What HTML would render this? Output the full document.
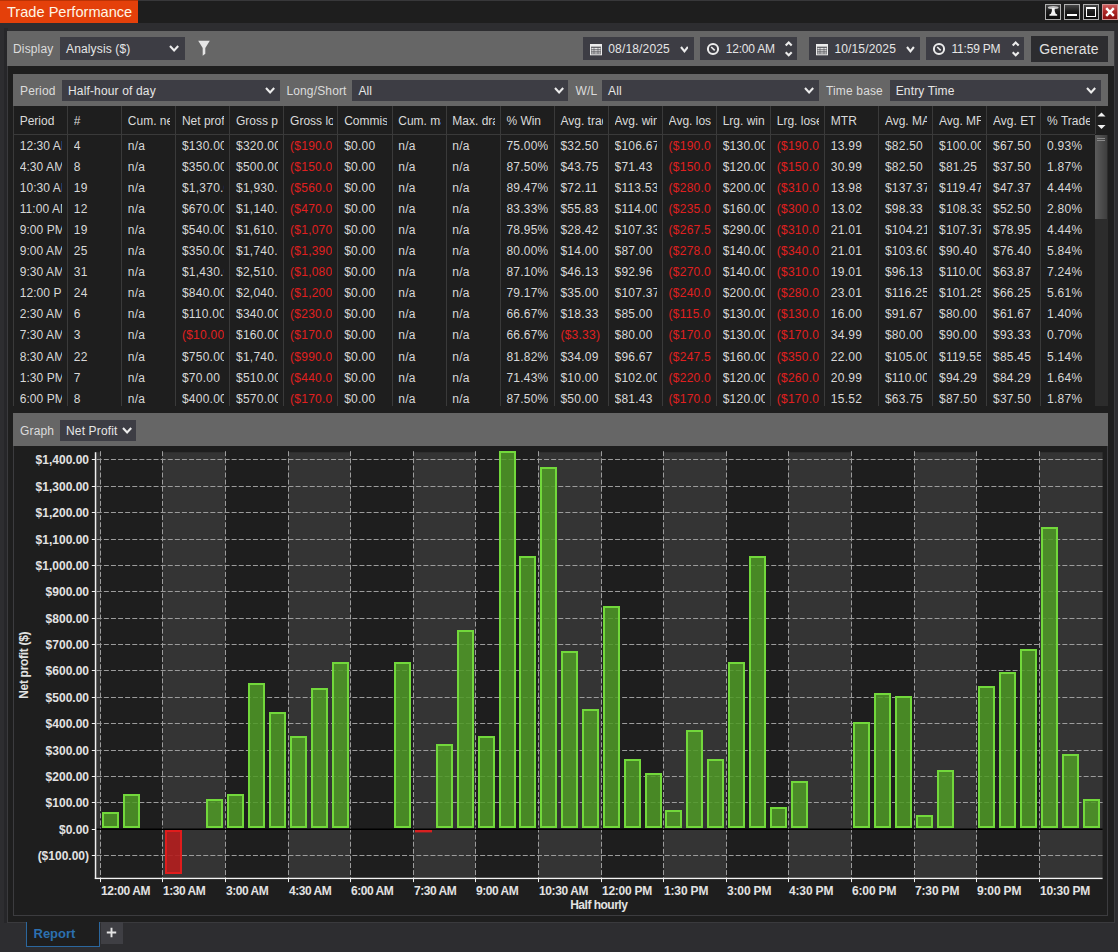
<!DOCTYPE html><html><head><meta charset="utf-8"><title>Trade Performance</title><style>
*{box-sizing:border-box;margin:0;padding:0}
html,body{width:1118px;height:952px;overflow:hidden;background:#2d2d30}
body{position:relative;font-family:"Liberation Sans",sans-serif;font-size:12px;color:#e4e4e4;letter-spacing:0.15px}
.abs{position:absolute}
#titlebar{left:0;top:0;width:1118px;height:23px;background:#1e1e1e;border-top:1px solid #38383a}
#tab{left:0;top:0;width:138px;height:23px;background:#e4400a;border-top:1px solid #b83205;color:#fff6e6;font-size:14.6px;line-height:22px;padding-left:7px;white-space:nowrap;letter-spacing:0}
.wb{top:4px;width:16px;height:16px;border:1px solid #b0b0b0;background:linear-gradient(#484848,#1c1c1c 45%,#0c0c0c)}
#content{left:7px;top:31px;width:1108px;height:892px;background:#1e1e1e;border-left:1px solid #3a3a3d;border-right:1px solid #3a3a3d;border-bottom:1px solid #3a3a3d}
.panel{background:#666666}
.lbl{color:#dcdcdc;white-space:nowrap;font-size:12px;line-height:14px}
.dd{background:#3d3d44;color:#e6e6e6;white-space:nowrap;font-size:12px;padding-left:6px}
.dd svg{position:absolute}
.cell{position:absolute;overflow:hidden;white-space:nowrap;font-size:12px;color:#d8d8d8;height:21px;line-height:21px;letter-spacing:0.24px}
.neg{color:#e02020}
.vline{position:absolute;width:1px;background:#3a3a3a}
#chartbox{left:13px;top:446px;width:1095px;height:470px;background:#1e1e1e;border:1px solid #3c3c3f;border-top:none}
.ax{font-weight:bold;font-size:11.8px;fill:#e2e2e2;font-family:"Liberation Sans",sans-serif;letter-spacing:0}
.axx{letter-spacing:-0.35px}
</style></head><body>
<div id="titlebar" class="abs"></div>
<div id="tab" class="abs">Trade Performance</div>
<div class="abs wb" style="left:1045px"><svg class="abs" style="left:0;top:0" width="14" height="14" viewBox="0 0 14 14"><ellipse cx="7.2" cy="2.6" rx="5.4" ry="1.7" fill="#c4c4c4"/><path d="M5.9 3 L8.7 3 L8.7 6 L9.7 8.7 L11.2 9.6 L11.2 10.8 L3.4 10.8 L3.4 9.6 L4.9 8.7 L5.9 6 Z" fill="#f4f4f4"/></svg></div>
<div class="abs wb" style="left:1064px"><div class="abs" style="left:2px;top:9px;width:10px;height:2px;background:#fff"></div></div>
<div class="abs wb" style="left:1083px"><div class="abs" style="left:2px;top:2px;width:10px;height:10px;border:1px solid #fff;border-top:2px solid #fff"></div></div>
<div class="abs wb" style="left:1102px;background:linear-gradient(#cc6060,#b02828 45%,#8a1010);border-color:#cf9090"><svg class="abs" style="left:0;top:0" width="14" height="14" viewBox="0 0 14 14"><path d="M3.2 3.2 L10.8 10.8 M10.8 3.2 L3.2 10.8" stroke="#fff" stroke-width="2.5" fill="none"/></svg></div>
<div class="abs" style="left:3.5px;top:28px;width:4px;height:895px;background:#262629"></div>
<div id="content" class="abs"></div>
<div class="abs panel" style="left:7px;top:31px;width:1107px;height:35px"></div>
<div class="abs lbl" style="left:13px;top:42px">Display</div>
<div class="abs dd" style="left:60px;top:37px;width:124.8px;height:23px;line-height:24.4px">Analysis ($)</div>
<svg class="abs" style="left:169.2px;top:44.6px" width="10.2" height="7.4" viewBox="-1 -1 10.2 7.4"><path d="M0 0 L4.1 4.4 L8.2 0" fill="none" stroke="#ececec" stroke-width="2.1" stroke-linecap="butt" stroke-linejoin="miter"/></svg>
<svg class="abs" style="left:197px;top:40px" width="14" height="17" viewBox="0 0 14 17"><path d="M1.2 0.8 L12.8 0.8 L8.3 8 L8.3 13.8 L5.7 15.8 L5.7 8 Z" fill="#e6e6e6"/></svg>
<div class="abs dd" style="left:583.3px;top:37px;width:110.5px;height:23px;line-height:24.4px;padding-left:25px">08/18/2025</div>
<svg class="abs" style="left:590.0px;top:43.8px" width="12" height="12" viewBox="0 0 12 12"><rect x="0.5" y="0.5" width="11" height="10.3" fill="#6a6a6e" stroke="#ececec" stroke-width="1"/><rect x="0" y="0" width="12" height="2.6" fill="#ececec"/><path d="M1.5 4.6 H10.5 M1.5 6.8 H10.5 M1.5 9 H10.5" stroke="#e4e4e4" stroke-width="1.1" fill="none"/><path d="M4 3 V10 M8 3 V10" stroke="#55555a" stroke-width="0.6" fill="none"/></svg>
<svg class="abs" style="left:679.5999999999999px;top:45.8px" width="8.9" height="7.3" viewBox="-1 -1 8.9 7.3"><path d="M0 0 L3.45 4.3 L6.9 0" fill="none" stroke="#ececec" stroke-width="2.1" stroke-linecap="butt" stroke-linejoin="miter"/></svg>
<div class="abs dd" style="left:700.2px;top:37px;width:96.5px;height:23px;line-height:24.4px;padding-left:25.5px;letter-spacing:-0.2px">12:00 AM</div>
<svg class="abs" style="left:705.9000000000001px;top:42.2px" width="14" height="14" viewBox="0 0 14 14"><circle cx="7" cy="7" r="5.1" fill="none" stroke="#ececec" stroke-width="2"/><path d="M5.2 5.0 L8.7 8.3" fill="none" stroke="#ececec" stroke-width="1.7"/></svg>
<svg class="abs" style="left:783.5px;top:40px" width="10" height="18" viewBox="0 0 10 18"><path d="M1.7 5.6 L4.7 2.6 L7.7 5.6" fill="none" stroke="#ececec" stroke-width="2.1"/><path d="M1.7 12.2 L4.7 15.2 L7.7 12.2" fill="none" stroke="#ececec" stroke-width="2.1"/></svg>
<div class="abs dd" style="left:809.4px;top:37px;width:110.2px;height:23px;line-height:24.4px;padding-left:25px">10/15/2025</div>
<svg class="abs" style="left:816.1px;top:43.8px" width="12" height="12" viewBox="0 0 12 12"><rect x="0.5" y="0.5" width="11" height="10.3" fill="#6a6a6e" stroke="#ececec" stroke-width="1"/><rect x="0" y="0" width="12" height="2.6" fill="#ececec"/><path d="M1.5 4.6 H10.5 M1.5 6.8 H10.5 M1.5 9 H10.5" stroke="#e4e4e4" stroke-width="1.1" fill="none"/><path d="M4 3 V10 M8 3 V10" stroke="#55555a" stroke-width="0.6" fill="none"/></svg>
<svg class="abs" style="left:905.6999999999999px;top:45.8px" width="8.9" height="7.3" viewBox="-1 -1 8.9 7.3"><path d="M0 0 L3.45 4.3 L6.9 0" fill="none" stroke="#ececec" stroke-width="2.1" stroke-linecap="butt" stroke-linejoin="miter"/></svg>
<div class="abs dd" style="left:926px;top:37px;width:97.8px;height:23px;line-height:24.4px;padding-left:25.5px;letter-spacing:-0.2px">11:59 PM</div>
<svg class="abs" style="left:931.7px;top:42.2px" width="14" height="14" viewBox="0 0 14 14"><circle cx="7" cy="7" r="5.1" fill="none" stroke="#ececec" stroke-width="2"/><path d="M5.2 5.0 L8.7 8.3" fill="none" stroke="#ececec" stroke-width="1.7"/></svg>
<svg class="abs" style="left:1010.5999999999999px;top:40px" width="10" height="18" viewBox="0 0 10 18"><path d="M1.7 5.6 L4.7 2.6 L7.7 5.6" fill="none" stroke="#ececec" stroke-width="2.1"/><path d="M1.7 12.2 L4.7 15.2 L7.7 12.2" fill="none" stroke="#ececec" stroke-width="2.1"/></svg>
<div class="abs" style="left:1030.5px;top:35.5px;width:77px;height:26px;background:#2c2c2f;color:#e0e0e0;font-size:14px;line-height:26px;text-align:center">Generate</div>
<div class="abs panel" style="left:13px;top:73.5px;width:1095px;height:32.5px"></div>
<div class="abs lbl" style="left:20px;top:83.5px">Period</div>
<div class="abs dd" style="left:62px;top:80px;width:218px;height:21px;line-height:22.3px">Half-hour of day</div>
<svg class="abs" style="left:265.4px;top:87.3px" width="10.2" height="7.4" viewBox="-1 -1 10.2 7.4"><path d="M0 0 L4.1 4.4 L8.2 0" fill="none" stroke="#ececec" stroke-width="2.1" stroke-linecap="butt" stroke-linejoin="miter"/></svg>
<div class="abs lbl" style="left:286.4px;top:83.5px">Long/Short</div>
<div class="abs dd" style="left:352.4px;top:80px;width:216.1px;height:21px;line-height:22.3px">All</div>
<svg class="abs" style="left:553.9px;top:87.3px" width="10.2" height="7.4" viewBox="-1 -1 10.2 7.4"><path d="M0 0 L4.1 4.4 L8.2 0" fill="none" stroke="#ececec" stroke-width="2.1" stroke-linecap="butt" stroke-linejoin="miter"/></svg>
<div class="abs lbl" style="left:575.6px;top:83.5px">W/L</div>
<div class="abs dd" style="left:602px;top:80px;width:216.7px;height:21px;line-height:22.3px">All</div>
<svg class="abs" style="left:804.1px;top:87.3px" width="10.2" height="7.4" viewBox="-1 -1 10.2 7.4"><path d="M0 0 L4.1 4.4 L8.2 0" fill="none" stroke="#ececec" stroke-width="2.1" stroke-linecap="butt" stroke-linejoin="miter"/></svg>
<div class="abs lbl" style="left:826px;top:83.5px">Time base</div>
<div class="abs dd" style="left:889.7px;top:80px;width:211.3px;height:21px;line-height:22.3px">Entry Time</div>
<svg class="abs" style="left:1086.4px;top:87.3px" width="10.2" height="7.4" viewBox="-1 -1 10.2 7.4"><path d="M0 0 L4.1 4.4 L8.2 0" fill="none" stroke="#ececec" stroke-width="2.1" stroke-linecap="butt" stroke-linejoin="miter"/></svg>
<div class="abs" style="left:13px;top:106px;width:1095px;height:300px;background:#1e1e1e;overflow:hidden">
<div class="abs" style="left:0;top:27.5px;width:1082px;height:1px;background:#3a3a3a"></div>
<div class="cell" style="left:6.70px;top:3px;width:42.48px;height:24px;line-height:24px;color:#dadada;letter-spacing:0">Period</div>
<div class="cell" style="left:60.78px;top:3px;width:42.48px;height:24px;line-height:24px;color:#dadada;letter-spacing:0">#</div>
<div class="cell" style="left:114.85px;top:3px;width:42.48px;height:24px;line-height:24px;color:#dadada;letter-spacing:0">Cum. net profit</div>
<div class="cell" style="left:168.93px;top:3px;width:42.48px;height:24px;line-height:24px;color:#dadada;letter-spacing:0">Net profit</div>
<div class="cell" style="left:223.00px;top:3px;width:42.48px;height:24px;line-height:24px;color:#dadada;letter-spacing:0">Gross profit</div>
<div class="cell" style="left:277.07px;top:3px;width:42.48px;height:24px;line-height:24px;color:#dadada;letter-spacing:0">Gross loss</div>
<div class="cell" style="left:331.15px;top:3px;width:42.48px;height:24px;line-height:24px;color:#dadada;letter-spacing:0">Commission</div>
<div class="cell" style="left:385.23px;top:3px;width:42.48px;height:24px;line-height:24px;color:#dadada;letter-spacing:0">Cum. max. drawdown</div>
<div class="cell" style="left:439.30px;top:3px;width:42.48px;height:24px;line-height:24px;color:#dadada;letter-spacing:0">Max. drawdown</div>
<div class="cell" style="left:493.38px;top:3px;width:42.48px;height:24px;line-height:24px;color:#dadada;letter-spacing:0">% Win</div>
<div class="cell" style="left:547.45px;top:3px;width:42.48px;height:24px;line-height:24px;color:#dadada;letter-spacing:0">Avg. trade</div>
<div class="cell" style="left:601.53px;top:3px;width:42.48px;height:24px;line-height:24px;color:#dadada;letter-spacing:0">Avg. winner</div>
<div class="cell" style="left:655.60px;top:3px;width:42.48px;height:24px;line-height:24px;color:#dadada;letter-spacing:0">Avg. loser</div>
<div class="cell" style="left:709.68px;top:3px;width:42.48px;height:24px;line-height:24px;color:#dadada;letter-spacing:0">Lrg. winner</div>
<div class="cell" style="left:763.75px;top:3px;width:42.48px;height:24px;line-height:24px;color:#dadada;letter-spacing:0">Lrg. loser</div>
<div class="cell" style="left:817.83px;top:3px;width:42.48px;height:24px;line-height:24px;color:#dadada;letter-spacing:0">MTR</div>
<div class="cell" style="left:871.90px;top:3px;width:42.48px;height:24px;line-height:24px;color:#dadada;letter-spacing:0">Avg. MAE</div>
<div class="cell" style="left:925.98px;top:3px;width:42.48px;height:24px;line-height:24px;color:#dadada;letter-spacing:0">Avg. MFE</div>
<div class="cell" style="left:980.05px;top:3px;width:42.48px;height:24px;line-height:24px;color:#dadada;letter-spacing:0">Avg. ETD</div>
<div class="cell" style="left:1034.12px;top:3px;width:42.48px;height:24px;line-height:24px;color:#dadada;letter-spacing:0">% Trade</div>
<div class="cell" style="left:6.70px;top:29.7px;width:42.08px;letter-spacing:0.08px">12:30 AM</div>
<div class="cell" style="left:60.78px;top:29.7px;width:42.08px">4</div>
<div class="cell" style="left:114.85px;top:29.7px;width:42.08px">n/a</div>
<div class="cell" style="left:168.93px;top:29.7px;width:42.08px">$130.00</div>
<div class="cell" style="left:223.00px;top:29.7px;width:42.08px">$320.00</div>
<div class="cell neg" style="left:277.07px;top:29.7px;width:42.08px">($190.00)</div>
<div class="cell" style="left:331.15px;top:29.7px;width:42.08px">$0.00</div>
<div class="cell" style="left:385.23px;top:29.7px;width:42.08px">n/a</div>
<div class="cell" style="left:439.30px;top:29.7px;width:42.08px">n/a</div>
<div class="cell" style="left:493.38px;top:29.7px;width:42.08px">75.00%</div>
<div class="cell" style="left:547.45px;top:29.7px;width:42.08px">$32.50</div>
<div class="cell" style="left:601.53px;top:29.7px;width:42.08px">$106.67</div>
<div class="cell neg" style="left:655.60px;top:29.7px;width:42.08px">($190.00)</div>
<div class="cell" style="left:709.68px;top:29.7px;width:42.08px">$130.00</div>
<div class="cell neg" style="left:763.75px;top:29.7px;width:42.08px">($190.00)</div>
<div class="cell" style="left:817.83px;top:29.7px;width:42.08px">13.99</div>
<div class="cell" style="left:871.90px;top:29.7px;width:42.08px">$82.50</div>
<div class="cell" style="left:925.98px;top:29.7px;width:42.08px">$100.00</div>
<div class="cell" style="left:980.05px;top:29.7px;width:42.08px">$67.50</div>
<div class="cell" style="left:1034.12px;top:29.7px;width:42.08px">0.93%</div>
<div class="cell" style="left:6.70px;top:50.8px;width:42.08px;letter-spacing:0.08px">4:30 AM</div>
<div class="cell" style="left:60.78px;top:50.8px;width:42.08px">8</div>
<div class="cell" style="left:114.85px;top:50.8px;width:42.08px">n/a</div>
<div class="cell" style="left:168.93px;top:50.8px;width:42.08px">$350.00</div>
<div class="cell" style="left:223.00px;top:50.8px;width:42.08px">$500.00</div>
<div class="cell neg" style="left:277.07px;top:50.8px;width:42.08px">($150.00)</div>
<div class="cell" style="left:331.15px;top:50.8px;width:42.08px">$0.00</div>
<div class="cell" style="left:385.23px;top:50.8px;width:42.08px">n/a</div>
<div class="cell" style="left:439.30px;top:50.8px;width:42.08px">n/a</div>
<div class="cell" style="left:493.38px;top:50.8px;width:42.08px">87.50%</div>
<div class="cell" style="left:547.45px;top:50.8px;width:42.08px">$43.75</div>
<div class="cell" style="left:601.53px;top:50.8px;width:42.08px">$71.43</div>
<div class="cell neg" style="left:655.60px;top:50.8px;width:42.08px">($150.00)</div>
<div class="cell" style="left:709.68px;top:50.8px;width:42.08px">$120.00</div>
<div class="cell neg" style="left:763.75px;top:50.8px;width:42.08px">($150.00)</div>
<div class="cell" style="left:817.83px;top:50.8px;width:42.08px">30.99</div>
<div class="cell" style="left:871.90px;top:50.8px;width:42.08px">$82.50</div>
<div class="cell" style="left:925.98px;top:50.8px;width:42.08px">$81.25</div>
<div class="cell" style="left:980.05px;top:50.8px;width:42.08px">$37.50</div>
<div class="cell" style="left:1034.12px;top:50.8px;width:42.08px">1.87%</div>
<div class="cell" style="left:6.70px;top:71.9px;width:42.08px;letter-spacing:0.08px">10:30 AM</div>
<div class="cell" style="left:60.78px;top:71.9px;width:42.08px">19</div>
<div class="cell" style="left:114.85px;top:71.9px;width:42.08px">n/a</div>
<div class="cell" style="left:168.93px;top:71.9px;width:42.08px">$1,370.00</div>
<div class="cell" style="left:223.00px;top:71.9px;width:42.08px">$1,930.00</div>
<div class="cell neg" style="left:277.07px;top:71.9px;width:42.08px">($560.00)</div>
<div class="cell" style="left:331.15px;top:71.9px;width:42.08px">$0.00</div>
<div class="cell" style="left:385.23px;top:71.9px;width:42.08px">n/a</div>
<div class="cell" style="left:439.30px;top:71.9px;width:42.08px">n/a</div>
<div class="cell" style="left:493.38px;top:71.9px;width:42.08px">89.47%</div>
<div class="cell" style="left:547.45px;top:71.9px;width:42.08px">$72.11</div>
<div class="cell" style="left:601.53px;top:71.9px;width:42.08px">$113.53</div>
<div class="cell neg" style="left:655.60px;top:71.9px;width:42.08px">($280.00)</div>
<div class="cell" style="left:709.68px;top:71.9px;width:42.08px">$200.00</div>
<div class="cell neg" style="left:763.75px;top:71.9px;width:42.08px">($310.00)</div>
<div class="cell" style="left:817.83px;top:71.9px;width:42.08px">13.98</div>
<div class="cell" style="left:871.90px;top:71.9px;width:42.08px">$137.37</div>
<div class="cell" style="left:925.98px;top:71.9px;width:42.08px">$119.47</div>
<div class="cell" style="left:980.05px;top:71.9px;width:42.08px">$47.37</div>
<div class="cell" style="left:1034.12px;top:71.9px;width:42.08px">4.44%</div>
<div class="cell" style="left:6.70px;top:92.9px;width:42.08px;letter-spacing:0.08px">11:00 AM</div>
<div class="cell" style="left:60.78px;top:92.9px;width:42.08px">12</div>
<div class="cell" style="left:114.85px;top:92.9px;width:42.08px">n/a</div>
<div class="cell" style="left:168.93px;top:92.9px;width:42.08px">$670.00</div>
<div class="cell" style="left:223.00px;top:92.9px;width:42.08px">$1,140.00</div>
<div class="cell neg" style="left:277.07px;top:92.9px;width:42.08px">($470.00)</div>
<div class="cell" style="left:331.15px;top:92.9px;width:42.08px">$0.00</div>
<div class="cell" style="left:385.23px;top:92.9px;width:42.08px">n/a</div>
<div class="cell" style="left:439.30px;top:92.9px;width:42.08px">n/a</div>
<div class="cell" style="left:493.38px;top:92.9px;width:42.08px">83.33%</div>
<div class="cell" style="left:547.45px;top:92.9px;width:42.08px">$55.83</div>
<div class="cell" style="left:601.53px;top:92.9px;width:42.08px">$114.00</div>
<div class="cell neg" style="left:655.60px;top:92.9px;width:42.08px">($235.00)</div>
<div class="cell" style="left:709.68px;top:92.9px;width:42.08px">$160.00</div>
<div class="cell neg" style="left:763.75px;top:92.9px;width:42.08px">($300.00)</div>
<div class="cell" style="left:817.83px;top:92.9px;width:42.08px">13.02</div>
<div class="cell" style="left:871.90px;top:92.9px;width:42.08px">$98.33</div>
<div class="cell" style="left:925.98px;top:92.9px;width:42.08px">$108.33</div>
<div class="cell" style="left:980.05px;top:92.9px;width:42.08px">$52.50</div>
<div class="cell" style="left:1034.12px;top:92.9px;width:42.08px">2.80%</div>
<div class="cell" style="left:6.70px;top:114.0px;width:42.08px;letter-spacing:0.08px">9:00 PM</div>
<div class="cell" style="left:60.78px;top:114.0px;width:42.08px">19</div>
<div class="cell" style="left:114.85px;top:114.0px;width:42.08px">n/a</div>
<div class="cell" style="left:168.93px;top:114.0px;width:42.08px">$540.00</div>
<div class="cell" style="left:223.00px;top:114.0px;width:42.08px">$1,610.00</div>
<div class="cell neg" style="left:277.07px;top:114.0px;width:42.08px">($1,070.00)</div>
<div class="cell" style="left:331.15px;top:114.0px;width:42.08px">$0.00</div>
<div class="cell" style="left:385.23px;top:114.0px;width:42.08px">n/a</div>
<div class="cell" style="left:439.30px;top:114.0px;width:42.08px">n/a</div>
<div class="cell" style="left:493.38px;top:114.0px;width:42.08px">78.95%</div>
<div class="cell" style="left:547.45px;top:114.0px;width:42.08px">$28.42</div>
<div class="cell" style="left:601.53px;top:114.0px;width:42.08px">$107.33</div>
<div class="cell neg" style="left:655.60px;top:114.0px;width:42.08px">($267.50)</div>
<div class="cell" style="left:709.68px;top:114.0px;width:42.08px">$290.00</div>
<div class="cell neg" style="left:763.75px;top:114.0px;width:42.08px">($310.00)</div>
<div class="cell" style="left:817.83px;top:114.0px;width:42.08px">21.01</div>
<div class="cell" style="left:871.90px;top:114.0px;width:42.08px">$104.21</div>
<div class="cell" style="left:925.98px;top:114.0px;width:42.08px">$107.37</div>
<div class="cell" style="left:980.05px;top:114.0px;width:42.08px">$78.95</div>
<div class="cell" style="left:1034.12px;top:114.0px;width:42.08px">4.44%</div>
<div class="cell" style="left:6.70px;top:135.1px;width:42.08px;letter-spacing:0.08px">9:00 AM</div>
<div class="cell" style="left:60.78px;top:135.1px;width:42.08px">25</div>
<div class="cell" style="left:114.85px;top:135.1px;width:42.08px">n/a</div>
<div class="cell" style="left:168.93px;top:135.1px;width:42.08px">$350.00</div>
<div class="cell" style="left:223.00px;top:135.1px;width:42.08px">$1,740.00</div>
<div class="cell neg" style="left:277.07px;top:135.1px;width:42.08px">($1,390.00)</div>
<div class="cell" style="left:331.15px;top:135.1px;width:42.08px">$0.00</div>
<div class="cell" style="left:385.23px;top:135.1px;width:42.08px">n/a</div>
<div class="cell" style="left:439.30px;top:135.1px;width:42.08px">n/a</div>
<div class="cell" style="left:493.38px;top:135.1px;width:42.08px">80.00%</div>
<div class="cell" style="left:547.45px;top:135.1px;width:42.08px">$14.00</div>
<div class="cell" style="left:601.53px;top:135.1px;width:42.08px">$87.00</div>
<div class="cell neg" style="left:655.60px;top:135.1px;width:42.08px">($278.00)</div>
<div class="cell" style="left:709.68px;top:135.1px;width:42.08px">$140.00</div>
<div class="cell neg" style="left:763.75px;top:135.1px;width:42.08px">($340.00)</div>
<div class="cell" style="left:817.83px;top:135.1px;width:42.08px">21.01</div>
<div class="cell" style="left:871.90px;top:135.1px;width:42.08px">$103.60</div>
<div class="cell" style="left:925.98px;top:135.1px;width:42.08px">$90.40</div>
<div class="cell" style="left:980.05px;top:135.1px;width:42.08px">$76.40</div>
<div class="cell" style="left:1034.12px;top:135.1px;width:42.08px">5.84%</div>
<div class="cell" style="left:6.70px;top:156.2px;width:42.08px;letter-spacing:0.08px">9:30 AM</div>
<div class="cell" style="left:60.78px;top:156.2px;width:42.08px">31</div>
<div class="cell" style="left:114.85px;top:156.2px;width:42.08px">n/a</div>
<div class="cell" style="left:168.93px;top:156.2px;width:42.08px">$1,430.00</div>
<div class="cell" style="left:223.00px;top:156.2px;width:42.08px">$2,510.00</div>
<div class="cell neg" style="left:277.07px;top:156.2px;width:42.08px">($1,080.00)</div>
<div class="cell" style="left:331.15px;top:156.2px;width:42.08px">$0.00</div>
<div class="cell" style="left:385.23px;top:156.2px;width:42.08px">n/a</div>
<div class="cell" style="left:439.30px;top:156.2px;width:42.08px">n/a</div>
<div class="cell" style="left:493.38px;top:156.2px;width:42.08px">87.10%</div>
<div class="cell" style="left:547.45px;top:156.2px;width:42.08px">$46.13</div>
<div class="cell" style="left:601.53px;top:156.2px;width:42.08px">$92.96</div>
<div class="cell neg" style="left:655.60px;top:156.2px;width:42.08px">($270.00)</div>
<div class="cell" style="left:709.68px;top:156.2px;width:42.08px">$140.00</div>
<div class="cell neg" style="left:763.75px;top:156.2px;width:42.08px">($310.00)</div>
<div class="cell" style="left:817.83px;top:156.2px;width:42.08px">19.01</div>
<div class="cell" style="left:871.90px;top:156.2px;width:42.08px">$96.13</div>
<div class="cell" style="left:925.98px;top:156.2px;width:42.08px">$110.00</div>
<div class="cell" style="left:980.05px;top:156.2px;width:42.08px">$63.87</div>
<div class="cell" style="left:1034.12px;top:156.2px;width:42.08px">7.24%</div>
<div class="cell" style="left:6.70px;top:177.3px;width:42.08px;letter-spacing:0.08px">12:00 PM</div>
<div class="cell" style="left:60.78px;top:177.3px;width:42.08px">24</div>
<div class="cell" style="left:114.85px;top:177.3px;width:42.08px">n/a</div>
<div class="cell" style="left:168.93px;top:177.3px;width:42.08px">$840.00</div>
<div class="cell" style="left:223.00px;top:177.3px;width:42.08px">$2,040.00</div>
<div class="cell neg" style="left:277.07px;top:177.3px;width:42.08px">($1,200.00)</div>
<div class="cell" style="left:331.15px;top:177.3px;width:42.08px">$0.00</div>
<div class="cell" style="left:385.23px;top:177.3px;width:42.08px">n/a</div>
<div class="cell" style="left:439.30px;top:177.3px;width:42.08px">n/a</div>
<div class="cell" style="left:493.38px;top:177.3px;width:42.08px">79.17%</div>
<div class="cell" style="left:547.45px;top:177.3px;width:42.08px">$35.00</div>
<div class="cell" style="left:601.53px;top:177.3px;width:42.08px">$107.37</div>
<div class="cell neg" style="left:655.60px;top:177.3px;width:42.08px">($240.00)</div>
<div class="cell" style="left:709.68px;top:177.3px;width:42.08px">$200.00</div>
<div class="cell neg" style="left:763.75px;top:177.3px;width:42.08px">($280.00)</div>
<div class="cell" style="left:817.83px;top:177.3px;width:42.08px">23.01</div>
<div class="cell" style="left:871.90px;top:177.3px;width:42.08px">$116.25</div>
<div class="cell" style="left:925.98px;top:177.3px;width:42.08px">$101.25</div>
<div class="cell" style="left:980.05px;top:177.3px;width:42.08px">$66.25</div>
<div class="cell" style="left:1034.12px;top:177.3px;width:42.08px">5.61%</div>
<div class="cell" style="left:6.70px;top:198.3px;width:42.08px;letter-spacing:0.08px">2:30 AM</div>
<div class="cell" style="left:60.78px;top:198.3px;width:42.08px">6</div>
<div class="cell" style="left:114.85px;top:198.3px;width:42.08px">n/a</div>
<div class="cell" style="left:168.93px;top:198.3px;width:42.08px">$110.00</div>
<div class="cell" style="left:223.00px;top:198.3px;width:42.08px">$340.00</div>
<div class="cell neg" style="left:277.07px;top:198.3px;width:42.08px">($230.00)</div>
<div class="cell" style="left:331.15px;top:198.3px;width:42.08px">$0.00</div>
<div class="cell" style="left:385.23px;top:198.3px;width:42.08px">n/a</div>
<div class="cell" style="left:439.30px;top:198.3px;width:42.08px">n/a</div>
<div class="cell" style="left:493.38px;top:198.3px;width:42.08px">66.67%</div>
<div class="cell" style="left:547.45px;top:198.3px;width:42.08px">$18.33</div>
<div class="cell" style="left:601.53px;top:198.3px;width:42.08px">$85.00</div>
<div class="cell neg" style="left:655.60px;top:198.3px;width:42.08px">($115.00)</div>
<div class="cell" style="left:709.68px;top:198.3px;width:42.08px">$130.00</div>
<div class="cell neg" style="left:763.75px;top:198.3px;width:42.08px">($130.00)</div>
<div class="cell" style="left:817.83px;top:198.3px;width:42.08px">16.00</div>
<div class="cell" style="left:871.90px;top:198.3px;width:42.08px">$91.67</div>
<div class="cell" style="left:925.98px;top:198.3px;width:42.08px">$80.00</div>
<div class="cell" style="left:980.05px;top:198.3px;width:42.08px">$61.67</div>
<div class="cell" style="left:1034.12px;top:198.3px;width:42.08px">1.40%</div>
<div class="cell" style="left:6.70px;top:219.4px;width:42.08px;letter-spacing:0.08px">7:30 AM</div>
<div class="cell" style="left:60.78px;top:219.4px;width:42.08px">3</div>
<div class="cell" style="left:114.85px;top:219.4px;width:42.08px">n/a</div>
<div class="cell neg" style="left:168.93px;top:219.4px;width:42.08px">($10.00)</div>
<div class="cell" style="left:223.00px;top:219.4px;width:42.08px">$160.00</div>
<div class="cell neg" style="left:277.07px;top:219.4px;width:42.08px">($170.00)</div>
<div class="cell" style="left:331.15px;top:219.4px;width:42.08px">$0.00</div>
<div class="cell" style="left:385.23px;top:219.4px;width:42.08px">n/a</div>
<div class="cell" style="left:439.30px;top:219.4px;width:42.08px">n/a</div>
<div class="cell" style="left:493.38px;top:219.4px;width:42.08px">66.67%</div>
<div class="cell neg" style="left:547.45px;top:219.4px;width:42.08px">($3.33)</div>
<div class="cell" style="left:601.53px;top:219.4px;width:42.08px">$80.00</div>
<div class="cell neg" style="left:655.60px;top:219.4px;width:42.08px">($170.00)</div>
<div class="cell" style="left:709.68px;top:219.4px;width:42.08px">$130.00</div>
<div class="cell neg" style="left:763.75px;top:219.4px;width:42.08px">($170.00)</div>
<div class="cell" style="left:817.83px;top:219.4px;width:42.08px">34.99</div>
<div class="cell" style="left:871.90px;top:219.4px;width:42.08px">$80.00</div>
<div class="cell" style="left:925.98px;top:219.4px;width:42.08px">$90.00</div>
<div class="cell" style="left:980.05px;top:219.4px;width:42.08px">$93.33</div>
<div class="cell" style="left:1034.12px;top:219.4px;width:42.08px">0.70%</div>
<div class="cell" style="left:6.70px;top:240.5px;width:42.08px;letter-spacing:0.08px">8:30 AM</div>
<div class="cell" style="left:60.78px;top:240.5px;width:42.08px">22</div>
<div class="cell" style="left:114.85px;top:240.5px;width:42.08px">n/a</div>
<div class="cell" style="left:168.93px;top:240.5px;width:42.08px">$750.00</div>
<div class="cell" style="left:223.00px;top:240.5px;width:42.08px">$1,740.00</div>
<div class="cell neg" style="left:277.07px;top:240.5px;width:42.08px">($990.00)</div>
<div class="cell" style="left:331.15px;top:240.5px;width:42.08px">$0.00</div>
<div class="cell" style="left:385.23px;top:240.5px;width:42.08px">n/a</div>
<div class="cell" style="left:439.30px;top:240.5px;width:42.08px">n/a</div>
<div class="cell" style="left:493.38px;top:240.5px;width:42.08px">81.82%</div>
<div class="cell" style="left:547.45px;top:240.5px;width:42.08px">$34.09</div>
<div class="cell" style="left:601.53px;top:240.5px;width:42.08px">$96.67</div>
<div class="cell neg" style="left:655.60px;top:240.5px;width:42.08px">($247.50)</div>
<div class="cell" style="left:709.68px;top:240.5px;width:42.08px">$160.00</div>
<div class="cell neg" style="left:763.75px;top:240.5px;width:42.08px">($350.00)</div>
<div class="cell" style="left:817.83px;top:240.5px;width:42.08px">22.00</div>
<div class="cell" style="left:871.90px;top:240.5px;width:42.08px">$105.00</div>
<div class="cell" style="left:925.98px;top:240.5px;width:42.08px">$119.55</div>
<div class="cell" style="left:980.05px;top:240.5px;width:42.08px">$85.45</div>
<div class="cell" style="left:1034.12px;top:240.5px;width:42.08px">5.14%</div>
<div class="cell" style="left:6.70px;top:261.6px;width:42.08px;letter-spacing:0.08px">1:30 PM</div>
<div class="cell" style="left:60.78px;top:261.6px;width:42.08px">7</div>
<div class="cell" style="left:114.85px;top:261.6px;width:42.08px">n/a</div>
<div class="cell" style="left:168.93px;top:261.6px;width:42.08px">$70.00</div>
<div class="cell" style="left:223.00px;top:261.6px;width:42.08px">$510.00</div>
<div class="cell neg" style="left:277.07px;top:261.6px;width:42.08px">($440.00)</div>
<div class="cell" style="left:331.15px;top:261.6px;width:42.08px">$0.00</div>
<div class="cell" style="left:385.23px;top:261.6px;width:42.08px">n/a</div>
<div class="cell" style="left:439.30px;top:261.6px;width:42.08px">n/a</div>
<div class="cell" style="left:493.38px;top:261.6px;width:42.08px">71.43%</div>
<div class="cell" style="left:547.45px;top:261.6px;width:42.08px">$10.00</div>
<div class="cell" style="left:601.53px;top:261.6px;width:42.08px">$102.00</div>
<div class="cell neg" style="left:655.60px;top:261.6px;width:42.08px">($220.00)</div>
<div class="cell" style="left:709.68px;top:261.6px;width:42.08px">$120.00</div>
<div class="cell neg" style="left:763.75px;top:261.6px;width:42.08px">($260.00)</div>
<div class="cell" style="left:817.83px;top:261.6px;width:42.08px">20.99</div>
<div class="cell" style="left:871.90px;top:261.6px;width:42.08px">$110.00</div>
<div class="cell" style="left:925.98px;top:261.6px;width:42.08px">$94.29</div>
<div class="cell" style="left:980.05px;top:261.6px;width:42.08px">$84.29</div>
<div class="cell" style="left:1034.12px;top:261.6px;width:42.08px">1.64%</div>
<div class="cell" style="left:6.70px;top:282.7px;width:42.08px;letter-spacing:0.08px">6:00 PM</div>
<div class="cell" style="left:60.78px;top:282.7px;width:42.08px">8</div>
<div class="cell" style="left:114.85px;top:282.7px;width:42.08px">n/a</div>
<div class="cell" style="left:168.93px;top:282.7px;width:42.08px">$400.00</div>
<div class="cell" style="left:223.00px;top:282.7px;width:42.08px">$570.00</div>
<div class="cell neg" style="left:277.07px;top:282.7px;width:42.08px">($170.00)</div>
<div class="cell" style="left:331.15px;top:282.7px;width:42.08px">$0.00</div>
<div class="cell" style="left:385.23px;top:282.7px;width:42.08px">n/a</div>
<div class="cell" style="left:439.30px;top:282.7px;width:42.08px">n/a</div>
<div class="cell" style="left:493.38px;top:282.7px;width:42.08px">87.50%</div>
<div class="cell" style="left:547.45px;top:282.7px;width:42.08px">$50.00</div>
<div class="cell" style="left:601.53px;top:282.7px;width:42.08px">$81.43</div>
<div class="cell neg" style="left:655.60px;top:282.7px;width:42.08px">($170.00)</div>
<div class="cell" style="left:709.68px;top:282.7px;width:42.08px">$120.00</div>
<div class="cell neg" style="left:763.75px;top:282.7px;width:42.08px">($170.00)</div>
<div class="cell" style="left:817.83px;top:282.7px;width:42.08px">15.52</div>
<div class="cell" style="left:871.90px;top:282.7px;width:42.08px">$63.75</div>
<div class="cell" style="left:925.98px;top:282.7px;width:42.08px">$87.50</div>
<div class="cell" style="left:980.05px;top:282.7px;width:42.08px">$37.50</div>
<div class="cell" style="left:1034.12px;top:282.7px;width:42.08px">1.87%</div>
<div class="vline" style="left:0.00px;top:0;height:300px"></div>
<div class="vline" style="left:54.08px;top:0;height:300px"></div>
<div class="vline" style="left:108.15px;top:0;height:300px"></div>
<div class="vline" style="left:162.23px;top:0;height:300px"></div>
<div class="vline" style="left:216.30px;top:0;height:300px"></div>
<div class="vline" style="left:270.38px;top:0;height:300px"></div>
<div class="vline" style="left:324.45px;top:0;height:300px"></div>
<div class="vline" style="left:378.53px;top:0;height:300px"></div>
<div class="vline" style="left:432.60px;top:0;height:300px"></div>
<div class="vline" style="left:486.68px;top:0;height:300px"></div>
<div class="vline" style="left:540.75px;top:0;height:300px"></div>
<div class="vline" style="left:594.83px;top:0;height:300px"></div>
<div class="vline" style="left:648.90px;top:0;height:300px"></div>
<div class="vline" style="left:702.98px;top:0;height:300px"></div>
<div class="vline" style="left:757.05px;top:0;height:300px"></div>
<div class="vline" style="left:811.12px;top:0;height:300px"></div>
<div class="vline" style="left:865.20px;top:0;height:300px"></div>
<div class="vline" style="left:919.28px;top:0;height:300px"></div>
<div class="vline" style="left:973.35px;top:0;height:300px"></div>
<div class="vline" style="left:1027.42px;top:0;height:300px"></div>
<div class="vline" style="left:1081.50px;top:0;height:300px"></div>
<div class="abs" style="left:1081.5px;top:0;width:14px;height:300px;background:#1e1e1e"></div>
<div class="abs" style="left:1081.5px;top:28.5px;width:14px;height:271px;background:#2c2c2c"></div>
<svg class="abs" style="left:1083px;top:5px" width="11" height="20" viewBox="0 0 11 20"><path d="M1.5 5.5 L5.5 1.5 L9.5 5.5 Z" fill="#f0f0f0"/><path d="M1.5 14 L5.5 18 L9.5 14 Z" fill="#f0f0f0"/></svg>
<div class="abs" style="left:1082px;top:29px;width:12px;height:83.5px;background:linear-gradient(90deg,#5c5c5c,#4a4a4a 60%,#3e3e3e)"></div>
<div class="vline" style="left:1081.5px;top:0;height:28px"></div>
<div class="abs" style="left:1084px;top:31.5px;width:8px;height:1px;background:#8a8a8a"></div><div class="abs" style="left:1084px;top:33.5px;width:8px;height:1px;background:#8a8a8a"></div>
</div>
<div class="abs panel" style="left:13px;top:413.2px;width:1095px;height:33px"></div>
<div class="abs lbl" style="left:20px;top:423.5px">Graph</div>
<div class="abs dd" style="left:60px;top:420px;width:76px;height:20.5px;line-height:22.3px">Net Profit</div>
<svg class="abs" style="left:122.4px;top:426.8px" width="10.2" height="7.4" viewBox="-1 -1 10.2 7.4"><path d="M0 0 L4.1 4.4 L8.2 0" fill="none" stroke="#ececec" stroke-width="2.1" stroke-linecap="butt" stroke-linejoin="miter"/></svg>
<div id="chartbox" class="abs"></div>
<svg class="abs" style="left:0;top:0" width="1118" height="952" viewBox="0 0 1118 952"><rect x="96.25" y="452.2" width="4.25" height="425.90" fill="#343434"/><rect x="162.50" y="452.2" width="63.00" height="425.90" fill="#343434"/><rect x="288.50" y="452.2" width="62.00" height="425.90" fill="#343434"/><rect x="413.50" y="452.2" width="62.00" height="425.90" fill="#343434"/><rect x="538.50" y="452.2" width="63.00" height="425.90" fill="#343434"/><rect x="663.50" y="452.2" width="63.00" height="425.90" fill="#343434"/><rect x="788.50" y="452.2" width="63.00" height="425.90" fill="#343434"/><rect x="914.50" y="452.2" width="62.00" height="425.90" fill="#343434"/><rect x="1039.50" y="452.2" width="63.10" height="425.90" fill="#343434"/><line x1="96.75" y1="855.50" x2="1102.6" y2="855.50" stroke="#9c9c9c" stroke-width="1" stroke-dasharray="5 2.1"/><line x1="96.75" y1="802.50" x2="1102.6" y2="802.50" stroke="#9c9c9c" stroke-width="1" stroke-dasharray="5 2.1"/><line x1="96.75" y1="776.50" x2="1102.6" y2="776.50" stroke="#9c9c9c" stroke-width="1" stroke-dasharray="5 2.1"/><line x1="96.75" y1="750.50" x2="1102.6" y2="750.50" stroke="#9c9c9c" stroke-width="1" stroke-dasharray="5 2.1"/><line x1="96.75" y1="723.50" x2="1102.6" y2="723.50" stroke="#9c9c9c" stroke-width="1" stroke-dasharray="5 2.1"/><line x1="96.75" y1="697.50" x2="1102.6" y2="697.50" stroke="#9c9c9c" stroke-width="1" stroke-dasharray="5 2.1"/><line x1="96.75" y1="670.50" x2="1102.6" y2="670.50" stroke="#9c9c9c" stroke-width="1" stroke-dasharray="5 2.1"/><line x1="96.75" y1="644.50" x2="1102.6" y2="644.50" stroke="#9c9c9c" stroke-width="1" stroke-dasharray="5 2.1"/><line x1="96.75" y1="618.50" x2="1102.6" y2="618.50" stroke="#9c9c9c" stroke-width="1" stroke-dasharray="5 2.1"/><line x1="96.75" y1="591.50" x2="1102.6" y2="591.50" stroke="#9c9c9c" stroke-width="1" stroke-dasharray="5 2.1"/><line x1="96.75" y1="565.50" x2="1102.6" y2="565.50" stroke="#9c9c9c" stroke-width="1" stroke-dasharray="5 2.1"/><line x1="96.75" y1="539.50" x2="1102.6" y2="539.50" stroke="#9c9c9c" stroke-width="1" stroke-dasharray="5 2.1"/><line x1="96.75" y1="512.50" x2="1102.6" y2="512.50" stroke="#9c9c9c" stroke-width="1" stroke-dasharray="5 2.1"/><line x1="96.75" y1="486.50" x2="1102.6" y2="486.50" stroke="#9c9c9c" stroke-width="1" stroke-dasharray="5 2.1"/><line x1="96.75" y1="459.50" x2="1102.6" y2="459.50" stroke="#9c9c9c" stroke-width="1" stroke-dasharray="5 2.1"/><line x1="100.50" y1="451.2" x2="100.50" y2="878.1" stroke="#9c9c9c" stroke-width="1" stroke-dasharray="5 2.1"/><line x1="162.50" y1="451.2" x2="162.50" y2="878.1" stroke="#9c9c9c" stroke-width="1" stroke-dasharray="5 2.1"/><line x1="225.50" y1="451.2" x2="225.50" y2="878.1" stroke="#9c9c9c" stroke-width="1" stroke-dasharray="5 2.1"/><line x1="288.50" y1="451.2" x2="288.50" y2="878.1" stroke="#9c9c9c" stroke-width="1" stroke-dasharray="5 2.1"/><line x1="350.50" y1="451.2" x2="350.50" y2="878.1" stroke="#9c9c9c" stroke-width="1" stroke-dasharray="5 2.1"/><line x1="413.50" y1="451.2" x2="413.50" y2="878.1" stroke="#9c9c9c" stroke-width="1" stroke-dasharray="5 2.1"/><line x1="475.50" y1="451.2" x2="475.50" y2="878.1" stroke="#9c9c9c" stroke-width="1" stroke-dasharray="5 2.1"/><line x1="538.50" y1="451.2" x2="538.50" y2="878.1" stroke="#9c9c9c" stroke-width="1" stroke-dasharray="5 2.1"/><line x1="601.50" y1="451.2" x2="601.50" y2="878.1" stroke="#9c9c9c" stroke-width="1" stroke-dasharray="5 2.1"/><line x1="663.50" y1="451.2" x2="663.50" y2="878.1" stroke="#9c9c9c" stroke-width="1" stroke-dasharray="5 2.1"/><line x1="726.50" y1="451.2" x2="726.50" y2="878.1" stroke="#9c9c9c" stroke-width="1" stroke-dasharray="5 2.1"/><line x1="788.50" y1="451.2" x2="788.50" y2="878.1" stroke="#9c9c9c" stroke-width="1" stroke-dasharray="5 2.1"/><line x1="851.50" y1="451.2" x2="851.50" y2="878.1" stroke="#9c9c9c" stroke-width="1" stroke-dasharray="5 2.1"/><line x1="914.50" y1="451.2" x2="914.50" y2="878.1" stroke="#9c9c9c" stroke-width="1" stroke-dasharray="5 2.1"/><line x1="976.50" y1="451.2" x2="976.50" y2="878.1" stroke="#9c9c9c" stroke-width="1" stroke-dasharray="5 2.1"/><line x1="1039.50" y1="451.2" x2="1039.50" y2="878.1" stroke="#9c9c9c" stroke-width="1" stroke-dasharray="5 2.1"/><rect x="103" y="813" width="15" height="14" fill="#4f9a26" fill-opacity="0.86" stroke="#72d83b" stroke-width="2"/><rect x="124" y="795" width="15" height="32" fill="#4f9a26" fill-opacity="0.86" stroke="#72d83b" stroke-width="2"/><rect x="166" y="831" width="15" height="42" fill="#b41e1e" fill-opacity="0.9" stroke="#e01c1c" stroke-width="2"/><rect x="207" y="800" width="15" height="27" fill="#4f9a26" fill-opacity="0.86" stroke="#72d83b" stroke-width="2"/><rect x="228" y="795" width="15" height="32" fill="#4f9a26" fill-opacity="0.86" stroke="#72d83b" stroke-width="2"/><rect x="249" y="684" width="15" height="143" fill="#4f9a26" fill-opacity="0.86" stroke="#72d83b" stroke-width="2"/><rect x="270" y="713" width="15" height="114" fill="#4f9a26" fill-opacity="0.86" stroke="#72d83b" stroke-width="2"/><rect x="291" y="737" width="15" height="90" fill="#4f9a26" fill-opacity="0.86" stroke="#72d83b" stroke-width="2"/><rect x="312" y="689" width="15" height="138" fill="#4f9a26" fill-opacity="0.86" stroke="#72d83b" stroke-width="2"/><rect x="333" y="663" width="15" height="164" fill="#4f9a26" fill-opacity="0.86" stroke="#72d83b" stroke-width="2"/><rect x="395" y="663" width="15" height="164" fill="#4f9a26" fill-opacity="0.86" stroke="#72d83b" stroke-width="2"/><rect x="415" y="830" width="17" height="2.4" fill="#d82020"/><rect x="437" y="745" width="15" height="82" fill="#4f9a26" fill-opacity="0.86" stroke="#72d83b" stroke-width="2"/><rect x="458" y="631" width="15" height="196" fill="#4f9a26" fill-opacity="0.86" stroke="#72d83b" stroke-width="2"/><rect x="479" y="737" width="15" height="90" fill="#4f9a26" fill-opacity="0.86" stroke="#72d83b" stroke-width="2"/><rect x="500" y="452" width="15" height="375" fill="#4f9a26" fill-opacity="0.86" stroke="#72d83b" stroke-width="2"/><rect x="520" y="557" width="15" height="270" fill="#4f9a26" fill-opacity="0.86" stroke="#72d83b" stroke-width="2"/><rect x="541" y="468" width="15" height="359" fill="#4f9a26" fill-opacity="0.86" stroke="#72d83b" stroke-width="2"/><rect x="562" y="652" width="15" height="175" fill="#4f9a26" fill-opacity="0.86" stroke="#72d83b" stroke-width="2"/><rect x="583" y="710" width="15" height="117" fill="#4f9a26" fill-opacity="0.86" stroke="#72d83b" stroke-width="2"/><rect x="604" y="607" width="15" height="220" fill="#4f9a26" fill-opacity="0.86" stroke="#72d83b" stroke-width="2"/><rect x="625" y="760" width="15" height="67" fill="#4f9a26" fill-opacity="0.86" stroke="#72d83b" stroke-width="2"/><rect x="646" y="774" width="15" height="53" fill="#4f9a26" fill-opacity="0.86" stroke="#72d83b" stroke-width="2"/><rect x="666" y="811" width="15" height="16" fill="#4f9a26" fill-opacity="0.86" stroke="#72d83b" stroke-width="2"/><rect x="687" y="731" width="15" height="96" fill="#4f9a26" fill-opacity="0.86" stroke="#72d83b" stroke-width="2"/><rect x="708" y="760" width="15" height="67" fill="#4f9a26" fill-opacity="0.86" stroke="#72d83b" stroke-width="2"/><rect x="729" y="663" width="15" height="164" fill="#4f9a26" fill-opacity="0.86" stroke="#72d83b" stroke-width="2"/><rect x="750" y="557" width="15" height="270" fill="#4f9a26" fill-opacity="0.86" stroke="#72d83b" stroke-width="2"/><rect x="771" y="808" width="15" height="19" fill="#4f9a26" fill-opacity="0.86" stroke="#72d83b" stroke-width="2"/><rect x="792" y="782" width="15" height="45" fill="#4f9a26" fill-opacity="0.86" stroke="#72d83b" stroke-width="2"/><rect x="854" y="723" width="15" height="104" fill="#4f9a26" fill-opacity="0.86" stroke="#72d83b" stroke-width="2"/><rect x="875" y="694" width="15" height="133" fill="#4f9a26" fill-opacity="0.86" stroke="#72d83b" stroke-width="2"/><rect x="896" y="697" width="15" height="130" fill="#4f9a26" fill-opacity="0.86" stroke="#72d83b" stroke-width="2"/><rect x="917" y="816" width="15" height="11" fill="#4f9a26" fill-opacity="0.86" stroke="#72d83b" stroke-width="2"/><rect x="938" y="771" width="15" height="56" fill="#4f9a26" fill-opacity="0.86" stroke="#72d83b" stroke-width="2"/><rect x="979" y="687" width="15" height="140" fill="#4f9a26" fill-opacity="0.86" stroke="#72d83b" stroke-width="2"/><rect x="1000" y="673" width="15" height="154" fill="#4f9a26" fill-opacity="0.86" stroke="#72d83b" stroke-width="2"/><rect x="1021" y="650" width="15" height="177" fill="#4f9a26" fill-opacity="0.86" stroke="#72d83b" stroke-width="2"/><rect x="1042" y="528" width="15" height="299" fill="#4f9a26" fill-opacity="0.86" stroke="#72d83b" stroke-width="2"/><rect x="1063" y="755" width="15" height="72" fill="#4f9a26" fill-opacity="0.86" stroke="#72d83b" stroke-width="2"/><rect x="1084" y="800" width="15" height="27" fill="#4f9a26" fill-opacity="0.86" stroke="#72d83b" stroke-width="2"/><rect x="96.25" y="828.5" width="1006.35" height="1.5" fill="#000"/><rect x="94.8" y="452.2" width="1.5" height="426.60" fill="#f0f0f0"/><rect x="94.8" y="877.75" width="1007.80" height="1.35" fill="#f4f4f4"/><line x1="91.8" y1="855.50" x2="95" y2="855.50" stroke="#f0f0f0" stroke-width="1"/><text class="ax" style="font-size:12px" x="89" y="859.80" text-anchor="end">($100.00)</text><line x1="91.8" y1="829.50" x2="95" y2="829.50" stroke="#f0f0f0" stroke-width="1"/><text class="ax" style="font-size:12px" x="89" y="833.80" text-anchor="end">$0.00</text><line x1="91.8" y1="802.50" x2="95" y2="802.50" stroke="#f0f0f0" stroke-width="1"/><text class="ax" style="font-size:12px" x="89" y="806.80" text-anchor="end">$100.00</text><line x1="91.8" y1="776.50" x2="95" y2="776.50" stroke="#f0f0f0" stroke-width="1"/><text class="ax" style="font-size:12px" x="89" y="780.80" text-anchor="end">$200.00</text><line x1="91.8" y1="750.50" x2="95" y2="750.50" stroke="#f0f0f0" stroke-width="1"/><text class="ax" style="font-size:12px" x="89" y="754.80" text-anchor="end">$300.00</text><line x1="91.8" y1="723.50" x2="95" y2="723.50" stroke="#f0f0f0" stroke-width="1"/><text class="ax" style="font-size:12px" x="89" y="727.80" text-anchor="end">$400.00</text><line x1="91.8" y1="697.50" x2="95" y2="697.50" stroke="#f0f0f0" stroke-width="1"/><text class="ax" style="font-size:12px" x="89" y="701.80" text-anchor="end">$500.00</text><line x1="91.8" y1="670.50" x2="95" y2="670.50" stroke="#f0f0f0" stroke-width="1"/><text class="ax" style="font-size:12px" x="89" y="674.80" text-anchor="end">$600.00</text><line x1="91.8" y1="644.50" x2="95" y2="644.50" stroke="#f0f0f0" stroke-width="1"/><text class="ax" style="font-size:12px" x="89" y="648.80" text-anchor="end">$700.00</text><line x1="91.8" y1="618.50" x2="95" y2="618.50" stroke="#f0f0f0" stroke-width="1"/><text class="ax" style="font-size:12px" x="89" y="622.80" text-anchor="end">$800.00</text><line x1="91.8" y1="591.50" x2="95" y2="591.50" stroke="#f0f0f0" stroke-width="1"/><text class="ax" style="font-size:12px" x="89" y="595.80" text-anchor="end">$900.00</text><line x1="91.8" y1="565.50" x2="95" y2="565.50" stroke="#f0f0f0" stroke-width="1"/><text class="ax" style="font-size:12px" x="89" y="569.80" text-anchor="end">$1,000.00</text><line x1="91.8" y1="539.50" x2="95" y2="539.50" stroke="#f0f0f0" stroke-width="1"/><text class="ax" style="font-size:12px" x="89" y="543.80" text-anchor="end">$1,100.00</text><line x1="91.8" y1="512.50" x2="95" y2="512.50" stroke="#f0f0f0" stroke-width="1"/><text class="ax" style="font-size:12px" x="89" y="516.80" text-anchor="end">$1,200.00</text><line x1="91.8" y1="486.50" x2="95" y2="486.50" stroke="#f0f0f0" stroke-width="1"/><text class="ax" style="font-size:12px" x="89" y="490.80" text-anchor="end">$1,300.00</text><line x1="91.8" y1="459.50" x2="95" y2="459.50" stroke="#f0f0f0" stroke-width="1"/><text class="ax" style="font-size:12px" x="89" y="463.80" text-anchor="end">$1,400.00</text><line x1="100.50" y1="878.1" x2="100.50" y2="882.1" stroke="#f0f0f0" stroke-width="1"/><text class="ax" style="font-size:12px;letter-spacing:-0.38px" x="101.00" y="895.2">12:00 AM</text><line x1="162.50" y1="878.1" x2="162.50" y2="882.1" stroke="#f0f0f0" stroke-width="1"/><text class="ax" style="font-size:12px;letter-spacing:-0.48px" x="163.00" y="895.2">1:30 AM</text><line x1="225.50" y1="878.1" x2="225.50" y2="882.1" stroke="#f0f0f0" stroke-width="1"/><text class="ax" style="font-size:12px;letter-spacing:-0.48px" x="226.00" y="895.2">3:00 AM</text><line x1="288.50" y1="878.1" x2="288.50" y2="882.1" stroke="#f0f0f0" stroke-width="1"/><text class="ax" style="font-size:12px;letter-spacing:-0.48px" x="289.00" y="895.2">4:30 AM</text><line x1="350.50" y1="878.1" x2="350.50" y2="882.1" stroke="#f0f0f0" stroke-width="1"/><text class="ax" style="font-size:12px;letter-spacing:-0.48px" x="351.00" y="895.2">6:00 AM</text><line x1="413.50" y1="878.1" x2="413.50" y2="882.1" stroke="#f0f0f0" stroke-width="1"/><text class="ax" style="font-size:12px;letter-spacing:-0.48px" x="414.00" y="895.2">7:30 AM</text><line x1="475.50" y1="878.1" x2="475.50" y2="882.1" stroke="#f0f0f0" stroke-width="1"/><text class="ax" style="font-size:12px;letter-spacing:-0.48px" x="476.00" y="895.2">9:00 AM</text><line x1="538.50" y1="878.1" x2="538.50" y2="882.1" stroke="#f0f0f0" stroke-width="1"/><text class="ax" style="font-size:12px;letter-spacing:-0.38px" x="539.00" y="895.2">10:30 AM</text><line x1="601.50" y1="878.1" x2="601.50" y2="882.1" stroke="#f0f0f0" stroke-width="1"/><text class="ax" style="font-size:12px;letter-spacing:-0.24px" x="602.00" y="895.2">12:00 PM</text><line x1="663.50" y1="878.1" x2="663.50" y2="882.1" stroke="#f0f0f0" stroke-width="1"/><text class="ax" style="font-size:12px;letter-spacing:-0.15px" x="664.00" y="895.2">1:30 PM</text><line x1="726.50" y1="878.1" x2="726.50" y2="882.1" stroke="#f0f0f0" stroke-width="1"/><text class="ax" style="font-size:12px;letter-spacing:-0.15px" x="727.00" y="895.2">3:00 PM</text><line x1="788.50" y1="878.1" x2="788.50" y2="882.1" stroke="#f0f0f0" stroke-width="1"/><text class="ax" style="font-size:12px;letter-spacing:-0.15px" x="789.00" y="895.2">4:30 PM</text><line x1="851.50" y1="878.1" x2="851.50" y2="882.1" stroke="#f0f0f0" stroke-width="1"/><text class="ax" style="font-size:12px;letter-spacing:-0.15px" x="852.00" y="895.2">6:00 PM</text><line x1="914.50" y1="878.1" x2="914.50" y2="882.1" stroke="#f0f0f0" stroke-width="1"/><text class="ax" style="font-size:12px;letter-spacing:-0.15px" x="915.00" y="895.2">7:30 PM</text><line x1="976.50" y1="878.1" x2="976.50" y2="882.1" stroke="#f0f0f0" stroke-width="1"/><text class="ax" style="font-size:12px;letter-spacing:-0.15px" x="977.00" y="895.2">9:00 PM</text><line x1="1039.50" y1="878.1" x2="1039.50" y2="882.1" stroke="#f0f0f0" stroke-width="1"/><text class="ax" style="font-size:12px;letter-spacing:-0.24px" x="1040.00" y="895.2">10:30 PM</text><text class="ax" style="font-size:12px;letter-spacing:-0.5px" x="598.8" y="909.3" text-anchor="middle">Half hourly</text><text class="ax" style="font-size:12px;letter-spacing:-0.3px" transform="translate(28.3,665.3) rotate(-90)" text-anchor="middle">Net profit ($)</text></svg>
<div class="abs" style="left:26px;top:922px;width:74px;height:24.5px;background:#1e1e1e;border:1px solid #2b679e;border-top:none"></div>
<div class="abs" style="left:33.5px;top:925px;font-size:13px;font-weight:bold;color:#2c70b0;line-height:17px;letter-spacing:0">Report</div>
<div class="abs" style="left:100.5px;top:922px;width:22.5px;height:21.5px;background:#3f3f44"></div>
<svg class="abs" style="left:105px;top:926px" width="13" height="13" viewBox="0 0 13 13"><path d="M6.5 1.8 V11.2 M1.8 6.5 H11.2" stroke="#e4e4e4" stroke-width="1.9" fill="none"/></svg>
</body></html>
